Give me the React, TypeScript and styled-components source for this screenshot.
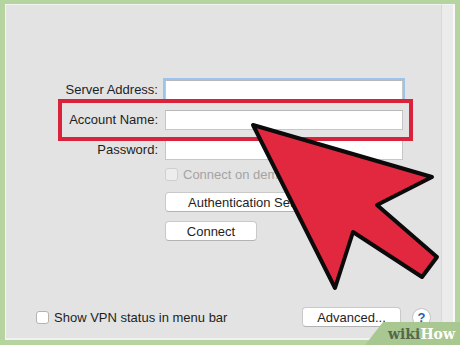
import styled, { createGlobalStyle } from "styled-components";

const GlobalStyle = createGlobalStyle`
  html, body {
    margin: 0;
    padding: 0;
    background: #b6d4a0;
  }
  * {
    box-sizing: border-box;
  }
`;

/*---> Main Component <---*/
const App = () => {
    return (
        <>
            <GlobalStyle />
            <Frame>
                <Window>
                    <Panel>
                        <Form>
                            <Label>Server Address:</Label>
                            <Field $focused />
                            <Label>Account Name:</Label>
                            <Field />
                            <Label>Password:</Label>
                            <Field />

                            <Controls>
                                <CheckRow $disabled>
                                    <Box $disabled />
                                    Connect on demand
                                </CheckRow>
                                <MacButton $width={190} $mt={11}>
                                    Authentication Settings...
                                </MacButton>
                                <MacButton $width={92} $mt={9}>
                                    Connect
                                </MacButton>
                            </Controls>
                        </Form>

                        <BottomBar>
                            <CheckRow>
                                <Box />
                                Show VPN status in menu bar
                            </CheckRow>
                            <Spacer />
                            <MacButton $width={99}>Advanced...</MacButton>
                            <HelpButton>?</HelpButton>
                        </BottomBar>
                    </Panel>
                    <SideStrip />
                </Window>

                <Highlight />

                <Arrow viewBox="0 0 460 345">
                    <polygon
                        points="253,125 432,177 377,205 437,257 422,277 353,232 335,288"
                        fill="#e2283f"
                        stroke="#0b0b0b"
                        strokeWidth="4"
                        strokeLinejoin="round"
                    />
                </Arrow>

                <Watermark>
                    <Wiki>wiki</Wiki>
                    <How>How</How>
                </Watermark>
            </Frame>
        </>
    );
};

export default App;


const Frame = styled.div`
    position: relative;
    width: 460px;
    height: 345px;
    overflow: hidden;
    background: #b6d4a0;
    padding: 4px 5px 5px 5px;
    font-family: "Liberation Sans", Arial, sans-serif;
    font-size: 13px;
    color: #1e1e1e;
`;

const Window = styled.div`
    display: flex;
    height: 100%;
    border-bottom: 2px solid #f1f1f1;
`;

const Panel = styled.div`
    flex: 1;
    display: flex;
    flex-direction: column;
    background: #e3e3e3;
    border-top: 1px solid #f3f3f3;
    border-left: 1px solid #f3f3f3;
`;

const SideStrip = styled.div`
    width: 14px;
    background: #ebebeb;
    border-left: 1px solid #d9d9d9;
    border-top: 1px solid #f3f3f3;
    border-right: 2px solid #f8f8f8;
`;

const Form = styled.div`
    display: grid;
    grid-template-columns: 152px 238px;
    column-gap: 7px;
    row-gap: 10px;
    align-items: center;
    padding-top: 75px;
`;

const Label = styled.div`
    text-align: right;
    line-height: 20px;
`;

const Field = styled.div<{ $focused?: boolean }>`
    height: 20px;
    background: #ffffff;
    border: 1px solid #c6c6c6;
    border-top-color: #b8b8b8;
    box-shadow: ${({ $focused }) =>
        $focused ? "0 0 0 2px #9cc3ee" : "none"};
`;

const Controls = styled.div`
    grid-column: 2;
    display: flex;
    flex-direction: column;
    align-items: flex-start;
    margin-top: -3px;
`;

const CheckRow = styled.div<{ $disabled?: boolean }>`
    display: flex;
    align-items: center;
    gap: 5px;
    height: 14px;
    white-space: nowrap;
    color: ${({ $disabled }) => ($disabled ? "#a3a3a3" : "#1e1e1e")};
`;

const Box = styled.div<{ $disabled?: boolean }>`
    width: 13px;
    height: 13px;
    border-radius: 3px;
    background: ${({ $disabled }) => ($disabled ? "#ededed" : "#ffffff")};
    border: 1px solid ${({ $disabled }) => ($disabled ? "#cfcfcf" : "#b3b3b3")};
`;

const MacButton = styled.div<{ $width: number; $mt?: number }>`
    width: ${({ $width }) => $width}px;
    height: 20px;
    margin-top: ${({ $mt }) => $mt ?? 0}px;
    display: flex;
    align-items: center;
    justify-content: center;
    white-space: nowrap;
    background: #ffffff;
    border: 1px solid #c9c9c9;
    border-bottom-color: #b3b3b3;
    border-radius: 4px;
    color: #1e1e1e;
`;

const BottomBar = styled.div`
    margin-top: auto;
    display: flex;
    align-items: center;
    padding: 0 10px 11px 30px;
`;

const Spacer = styled.div`
    flex: 1;
`;

const HelpButton = styled.div`
    width: 19px;
    height: 19px;
    margin-left: 11px;
    border-radius: 50%;
    background: #ffffff;
    border: 1px solid #c4c4c4;
    display: flex;
    align-items: center;
    justify-content: center;
    font-size: 13px;
    font-weight: bold;
    color: #2d5fa8;
`;

/* overlays drawn on top of the screenshot */
const Highlight = styled.div`
    position: absolute;
    left: 58px;
    top: 99px;
    width: 355px;
    height: 42px;
    border: 4px solid #db223c;
`;

const Arrow = styled.svg`
    position: absolute;
    left: 0;
    top: 0;
    width: 460px;
    height: 345px;
    pointer-events: none;
`;

const Watermark = styled.div`
    position: absolute;
    left: 365px;
    top: 322px;
    width: 95px;
    height: 23px;
    background: #a8c791;
    clip-path: polygon(18px 0, 100% 0, 100% 100%, 0 100%);
    display: flex;
    align-items: flex-end;
    justify-content: flex-end;
    padding: 0 5px 3px 0;
    font-family: "DejaVu Serif", "Liberation Serif", serif;
    font-weight: bold;
    font-size: 14px;
    line-height: 16px;
`;

const Wiki = styled.span`
    color: #56674c;
`;

const How = styled.span`
    color: #ffffff;
`;
